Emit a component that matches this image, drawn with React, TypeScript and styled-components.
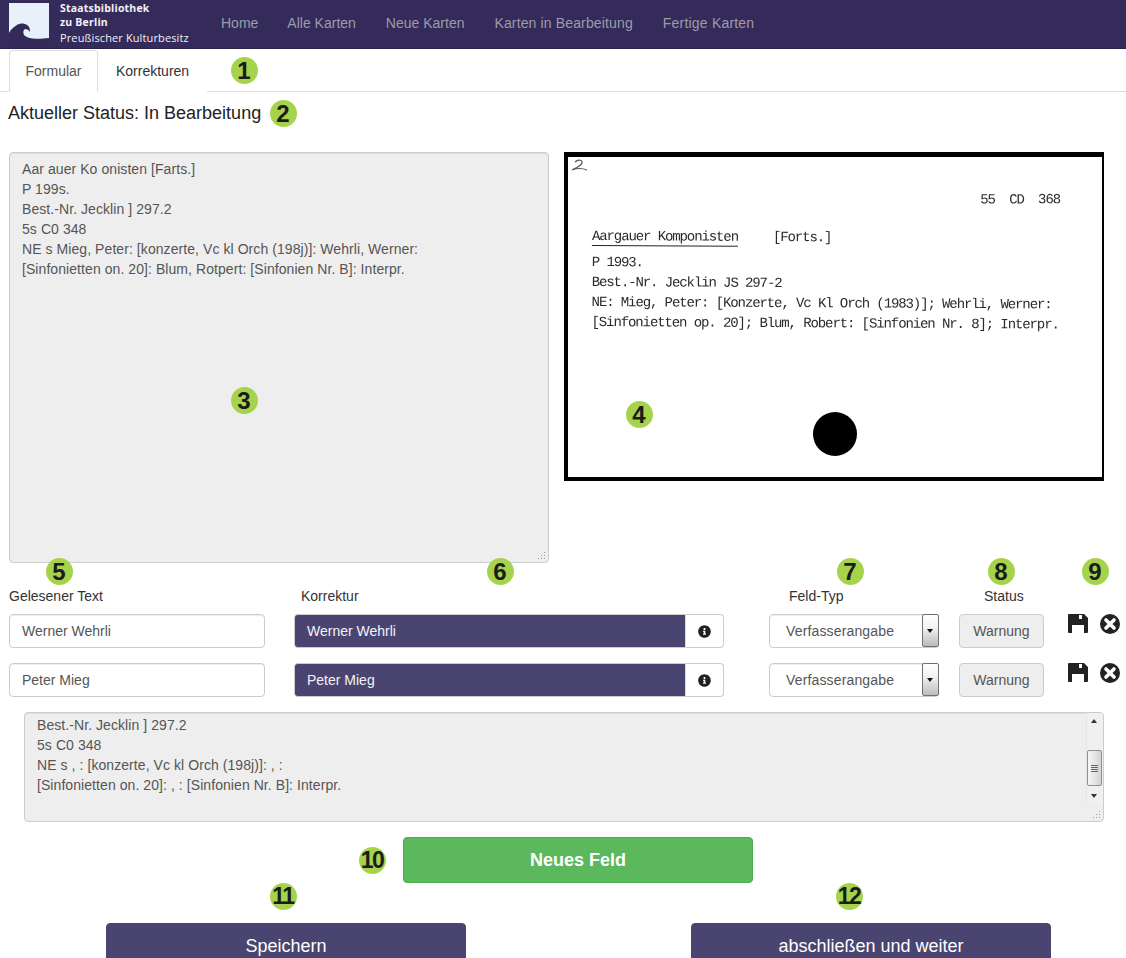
import React from "react";
import styled, { createGlobalStyle } from "styled-components";
import { FaInfoCircle } from "react-icons/fa";

const Global = createGlobalStyle`
  html, body { margin: 0; padding: 0; height: 958px; overflow: hidden; background: #fff; }
  body { font-family: "Liberation Sans", Arial, sans-serif; font-size: 14px; color: #333; }
  * { box-sizing: border-box; }
`;

const Page = styled.div`
  position: relative;
  width: 1126px;
  height: 958px;
  overflow: hidden;
`;

const Nav = styled.nav`
  height: 49px;
  background: #342b5b;
  border-bottom: 1px solid #2a2249;
  display: flex;
  align-items: stretch;
  padding-left: 9px;
`;

const Brand = styled.div`
  display: flex;
  align-items: flex-start;
  gap: 11px;
  width: 197px;
  padding-top: 3px;
`;

const BrandText = styled.div`
  font-family: "Open Sans", "DejaVu Sans", sans-serif;
  line-height: 14px;
  color: #f2f2f6;
  margin-top: -2px;
`;

const BrandLine = styled.div<{ $bold?: boolean }>`
  font-size: ${(p) => (p.$bold ? "10.5px" : "11px")};
  font-weight: ${(p) => (p.$bold ? 700 : 400)};
  margin-top: ${(p) => (p.$bold ? 0 : "2px")};
  letter-spacing: ${(p) => (p.$bold ? "0.2px" : "0.12px")};
  white-space: nowrap;
`;

const NavLink = styled.a<{ $ls?: number; $pr?: number }>`
  color: #9d9ba8;
  padding: 0 ${(p) => p.$pr ?? 15}px 0 15px;
  line-height: 47px;
  font-size: 14px;
  letter-spacing: ${(p) => p.$ls ?? 0}px;
`;

const Tabs = styled.div`
  height: 43px;
  padding: 1px 9px 0;
  border-bottom: 1px solid #ddd;
  display: flex;
  align-items: stretch;
  position: relative;
`;

const Tab = styled.a<{ $active?: boolean }>`
  width: ${(p) => (p.$active ? "89px" : "auto")};
  height: 42px;
  padding: ${(p) => (p.$active ? "0" : "0 17px")};
  line-height: 41px;
  text-align: center;
  color: ${(p) => (p.$active ? "#555" : "#333")};
  background: #fff;
  border: 1px solid ${(p) => (p.$active ? "#ddd" : "transparent")};
  border-bottom-color: ${(p) => (p.$active ? "#fff" : "transparent")};
  border-radius: 4px 4px 0 0;
`;

const Badge = styled.span<{ $x: number; $y: number; $tight?: boolean }>`
  position: absolute;
  left: ${(p) => p.$x - 13.5}px;
  top: ${(p) => p.$y - 13.5}px;
  width: 27px;
  height: 27px;
  border-radius: 50%;
  background: #a6d34c;
  color: #1c1c1c;
  font-weight: 700;
  font-size: ${(p) => (p.$tight ? "23px" : "24px")};
  line-height: 27px;
  text-align: center;
  letter-spacing: ${(p) => (p.$tight ? "-1.5px" : "0")};
  white-space: nowrap;
`;

const Status = styled.h1`
  margin: 0 0 18px;
  height: 42px;
  padding-left: 8px;
  font-size: 18px;
  font-weight: 400;
  line-height: 42px;
  color: #222;
`;

const ScanRow = styled.div`
  display: flex;
  align-items: flex-start;
  gap: 15px;
  padding-left: 9px;
  height: 411px;
`;

const ReadOnlyBox = styled.div<{ $w: number; $h: number; $pt: number; $pl: number }>`
  position: relative;
  width: ${(p) => p.$w}px;
  height: ${(p) => p.$h}px;
  padding: ${(p) => p.$pt}px 12px 0 ${(p) => p.$pl}px;
  background: #eee;
  border: 1px solid #ccc;
  border-radius: 4px;
  box-shadow: inset 0 1px 1px rgba(0, 0, 0, 0.075);
  color: #555;
  line-height: 20px;
  letter-spacing: 0.07px;
  white-space: pre-line;
  overflow: hidden;
`;

const Grip = styled.svg`
  position: absolute;
  right: 2px;
  bottom: 2px;
  width: 9px;
  height: 9px;
`;

const Scan = styled.div`
  position: relative;
  width: 540px;
  height: 329px;
  background: #fff;
  border-style: solid;
  border-color: #000;
  border-width: 5px 2px 4px 4px;
  font-family: "Liberation Mono", "DejaVu Sans Mono", monospace;
  font-size: 14px;
  letter-spacing: -1.1px;
  line-height: 20px;
  color: #2a2a2a;
  padding: 33px 0 0 24px;
  filter: blur(0.3px);
`;

const ScanText = styled.div`
  transform: rotate(0.3deg);
  transform-origin: 0 0;
`;

const ScanNumber = styled.div`
  text-align: right;
  padding-right: 42px;
  word-spacing: 7px;
  margin-bottom: 16px;
  transform: rotate(-0.2deg);
`;

const ScanHead = styled.div`
  display: flex;
  gap: 35px;
  margin-bottom: 6px;
`;

const Underlined = styled.span`
  border-bottom: 1.5px solid #222;
  height: 20px;
`;

const ScanLine = styled.div`
  white-space: pre;
  height: 20px;
`;

const Hole = styled.div`
  position: absolute;
  left: 245px;
  top: 255px;
  width: 44px;
  height: 44px;
  border-radius: 50%;
  background: #000;
`;

const Scribble = styled.svg`
  position: absolute;
  left: 2px;
  top: 1px;
  width: 18px;
  height: 15px;
`;

const FieldGrid = styled.div<{ $mb: number }>`
  display: grid;
  grid-template-columns: 285px 475px 190px 109px 1fr;
  padding-left: 9px;
  margin-bottom: ${(p) => p.$mb}px;
`;

const HeaderGrid = styled(FieldGrid)`
  padding-top: 23px;
  height: 51px;
`;

const Label = styled.label<{ $pl?: number }>`
  padding-left: ${(p) => p.$pl ?? 0}px;
  line-height: 20px;
  color: #333;
  white-space: nowrap;
`;

const TextField = styled.div`
  width: 256px;
  height: 34px;
  padding: 0 12px;
  line-height: 32px;
  color: #555;
  background: #fff;
  border: 1px solid #ccc;
  border-radius: 4px;
  box-shadow: inset 0 1px 1px rgba(0, 0, 0, 0.075);
`;

const Group = styled.div`
  display: flex;
  width: 430px;
  height: 34px;
`;

const CorrectionField = styled.div`
  flex: 1;
  padding: 0 12px;
  line-height: 32px;
  color: #f2f2f8;
  background: #4a4570;
  border: 1px solid #ccc;
  border-right: 0;
  border-radius: 4px 0 0 4px;
`;

const Addon = styled.div`
  width: 39px;
  display: flex;
  align-items: center;
  justify-content: center;
  padding-right: 1px;
  background: #fff;
  border: 1px solid #ccc;
  border-left: 1px solid #ddd;
  border-radius: 0 4px 4px 0;
  color: #222;
  font-size: 13px;
`;

const SelectBox = styled.div`
  position: relative;
  width: 170px;
  height: 34px;
  padding-left: 16px;
  line-height: 32px;
  letter-spacing: 0.15px;
  color: #555;
  background: #fff;
  border: 1px solid #ccc;
  border-radius: 4px;
  box-shadow: inset 0 1px 1px rgba(0, 0, 0, 0.075);
`;

const SelectArrow = styled.span`
  position: absolute;
  right: -1px;
  top: -1px;
  width: 17px;
  height: 33px;
  border: 1px solid #707070;
  border-radius: 2px;
  background: linear-gradient(#fff 0%, #f2f2f2 40%, #bcbcbc 100%);
  &::after {
    content: "";
    position: absolute;
    left: 4px;
    top: 14px;
    border-style: solid;
    border-width: 4px 3.5px 0;
    border-color: #111 transparent transparent;
  }
`;

const WarnBox = styled.div`
  width: 85px;
  height: 34px;
  text-align: center;
  line-height: 32px;
  color: #555;
  background: #eee;
  border: 1px solid #ccc;
  border-radius: 4px;
`;

const Actions = styled.div`
  display: flex;
  align-items: flex-start;
  gap: 12px;
  svg { display: block; }
`;

const Scrollbar = styled.div`
  position: absolute;
  right: 0;
  top: 0;
  width: 17px;
  height: 91px;
  background: #f0f0f0;
  border-left: 1px solid #e6e6e6;
`;

const Thumb = styled.div`
  position: absolute;
  left: 0;
  top: 37px;
  width: 15px;
  height: 36px;
  border: 1px solid #8f8f8f;
  border-radius: 2px;
  background: linear-gradient(90deg, #f6f6f6, #d4d4d4);
  display: flex;
  flex-direction: column;
  justify-content: center;
  align-items: center;
  gap: 1px;
`;

const ThumbLine = styled.span`
  width: 7px;
  height: 1px;
  background: #666;
`;

const Arrow = styled.span<{ $up?: boolean }>`
  position: absolute;
  left: 4px;
  ${(p) => (p.$up ? "top: 6px;" : "bottom: 6px;")}
  border-style: solid;
  border-width: ${(p) => (p.$up ? "0 3.5px 4px" : "4px 3.5px 0")};
  border-color: ${(p) =>
    p.$up ? "transparent transparent #333" : "#333 transparent transparent"};
`;

const LowerBox = styled.div`
  padding-left: 24px;
  margin-bottom: 15px;
`;

const CenterRow = styled.div`
  padding-left: 403px;
  margin-bottom: 40px;
`;

const GreenButton = styled.button`
  display: block;
  width: 350px;
  height: 46px;
  padding-bottom: 0;
  background: #5cb85c;
  border: 1px solid #4cae4c;
  border-radius: 4px;
  color: #fff;
  font: 700 18px "Liberation Sans", Arial, sans-serif;
`;

const ButtonRow = styled.div`
  display: flex;
  gap: 225px;
  padding-left: 106px;
`;

const PurpleButton = styled.button`
  width: 360px;
  height: 46px;
  background: #4a4570;
  border: 1px solid #4a4570;
  border-radius: 4px;
  color: #fff;
  font: 400 18px "Liberation Sans", Arial, sans-serif;
`;

const GripIcon = () => (
  <Grip viewBox="0 0 9 9">
    <g fill="#9a9a9a">
      <rect x="7" y="1" width="1" height="1" />
      <rect x="7" y="4" width="1" height="1" />
      <rect x="7" y="7" width="1" height="1" />
      <rect x="4" y="4" width="1" height="1" />
      <rect x="4" y="7" width="1" height="1" />
      <rect x="1" y="7" width="1" height="1" />
    </g>
  </Grip>
);

const Logo = () => (
  <svg width="40" height="39" viewBox="0 0 40 39">
    <rect width="40" height="39" fill="#e7f1fc" />
    <path
      d="M0 30 C2 26 5 24 8 22 C11 20 15 20 18 22 C20 23 21 25 21 29 C20 27 18 26 16 26 C14 27 14 30 15 32 C18 35 25 37 40 35 L40 39 L0 39 Z"
      fill="#332a5a"
    />
  </svg>
);

const SaveIcon = () => (
  <svg width="20" height="19" viewBox="0 0 20 19">
    <path
      fillRule="evenodd"
      fill="#222"
      d="M0 1 Q0 0 1 0 H16 L20 4 V18 Q20 19 19 19 H1 Q0 19 0 18 Z M4 11 H16 V19 H4 Z M11 1 H14 V5 H11 Z"
    />
  </svg>
);

const CloseIcon = () => (
  <svg width="20" height="20" viewBox="0 0 20 20">
    <circle cx="10" cy="10" r="10" fill="#222" />
    <path d="M6 6 L14 14 M14 6 L6 14" stroke="#fff" strokeWidth="3.6" strokeLinecap="round" />
  </svg>
);

const fieldRows = ["Werner Wehrli", "Peter Mieg"];

export default function App() {
  return (
    <Page>
      <Global />
      <Nav>
        <Brand>
          <Logo />
          <BrandText>
            <BrandLine $bold>Staatsbibliothek</BrandLine>
            <BrandLine $bold>zu Berlin</BrandLine>
            <BrandLine>Preußischer Kulturbesitz</BrandLine>
          </BrandText>
        </Brand>
        <NavLink $pr={14}>Home</NavLink>
        <NavLink>Alle Karten</NavLink>
        <NavLink>Neue Karten</NavLink>
        <NavLink $ls={0.14}>Karten in Bearbeitung</NavLink>
        <NavLink $ls={0.2}>Fertige Karten</NavLink>
      </Nav>
      <Tabs>
        <Tab $active>Formular</Tab>
        <Tab>Korrekturen</Tab>
      </Tabs>
      <Status>Aktueller Status: In Bearbeitung</Status>
      <ScanRow>
        <ReadOnlyBox $w={540} $h={411} $pt={6} $pl={12}>
          {`Aar auer Ko onisten [Farts.]
P 199s.
Best.-Nr. Jecklin ] 297.2
5s C0 348
NE s Mieg, Peter: [konzerte, Vc kl Orch (198j)]: Wehrli, Werner:
[Sinfonietten on. 20]: Blum, Rotpert: [Sinfonien Nr. B]: Interpr.`}
          <GripIcon />
        </ReadOnlyBox>
        <Scan>
          <Scribble viewBox="0 0 18 15">
            <path
              d="M5 4 C8 1 13 2 12 5 C11 8 6 10 2 12 C7 10 12 10 17 12"
              fill="none"
              stroke="#555"
              strokeWidth="1.2"
            />
          </Scribble>
          <ScanNumber>55 CD 368</ScanNumber>
          <ScanText>
            <ScanHead>
              <Underlined>Aargauer Komponisten</Underlined>
              <span>[Forts.]</span>
            </ScanHead>
            <ScanLine>P 1993.</ScanLine>
            <ScanLine>Best.-Nr. Jecklin JS 297-2</ScanLine>
            <ScanLine>NE: Mieg, Peter: [Konzerte, Vc Kl Orch (1983)]; Wehrli, Werner:</ScanLine>
            <ScanLine>[Sinfonietten op. 20]; Blum, Robert: [Sinfonien Nr. 8]; Interpr.</ScanLine>
          </ScanText>
          <Hole />
        </Scan>
      </ScanRow>
      <HeaderGrid $mb={0}>
        <Label>Gelesener Text</Label>
        <Label $pl={7}>Korrektur</Label>
        <Label $pl={20}>Feld-Typ</Label>
        <Label $pl={25}>Status</Label>
      </HeaderGrid>
      {fieldRows.map((name) => (
        <FieldGrid $mb={15} key={name}>
          <TextField>{name}</TextField>
          <Group>
            <CorrectionField>{name}</CorrectionField>
            <Addon>
              <FaInfoCircle />
            </Addon>
          </Group>
          <SelectBox>
            Verfasserangabe
            <SelectArrow />
          </SelectBox>
          <WarnBox>Warnung</WarnBox>
          <Actions>
            <SaveIcon />
            <CloseIcon />
          </Actions>
        </FieldGrid>
      ))}
      <LowerBox>
        <ReadOnlyBox $w={1080} $h={110} $pt={2} $pl={12}>
          {`Best.-Nr. Jecklin ] 297.2
5s C0 348
NE s , : [konzerte, Vc kl Orch (198j)]: , :
[Sinfonietten on. 20]: , : [Sinfonien Nr. B]: Interpr.`}
          <Scrollbar>
            <Arrow $up />
            <Thumb>
              <ThumbLine />
              <ThumbLine />
              <ThumbLine />
              <ThumbLine />
            </Thumb>
            <Arrow />
          </Scrollbar>
          <GripIcon />
        </ReadOnlyBox>
      </LowerBox>
      <CenterRow>
        <GreenButton>Neues Feld</GreenButton>
      </CenterRow>
      <ButtonRow>
        <PurpleButton>Speichern</PurpleButton>
        <PurpleButton>abschließen und weiter</PurpleButton>
      </ButtonRow>
      <Badge $x={244} $y={70}>1</Badge>
      <Badge $x={283} $y={113}>2</Badge>
      <Badge $x={244} $y={400}>3</Badge>
      <Badge $x={639} $y={414}>4</Badge>
      <Badge $x={59} $y={571}>5</Badge>
      <Badge $x={500} $y={571}>6</Badge>
      <Badge $x={850} $y={571}>7</Badge>
      <Badge $x={1001} $y={571}>8</Badge>
      <Badge $x={1095} $y={571}>9</Badge>
      <Badge $x={372} $y={860} $tight>10</Badge>
      <Badge $x={283} $y={896} $tight>11</Badge>
      <Badge $x={849} $y={896} $tight>12</Badge>
    </Page>
  );
}
